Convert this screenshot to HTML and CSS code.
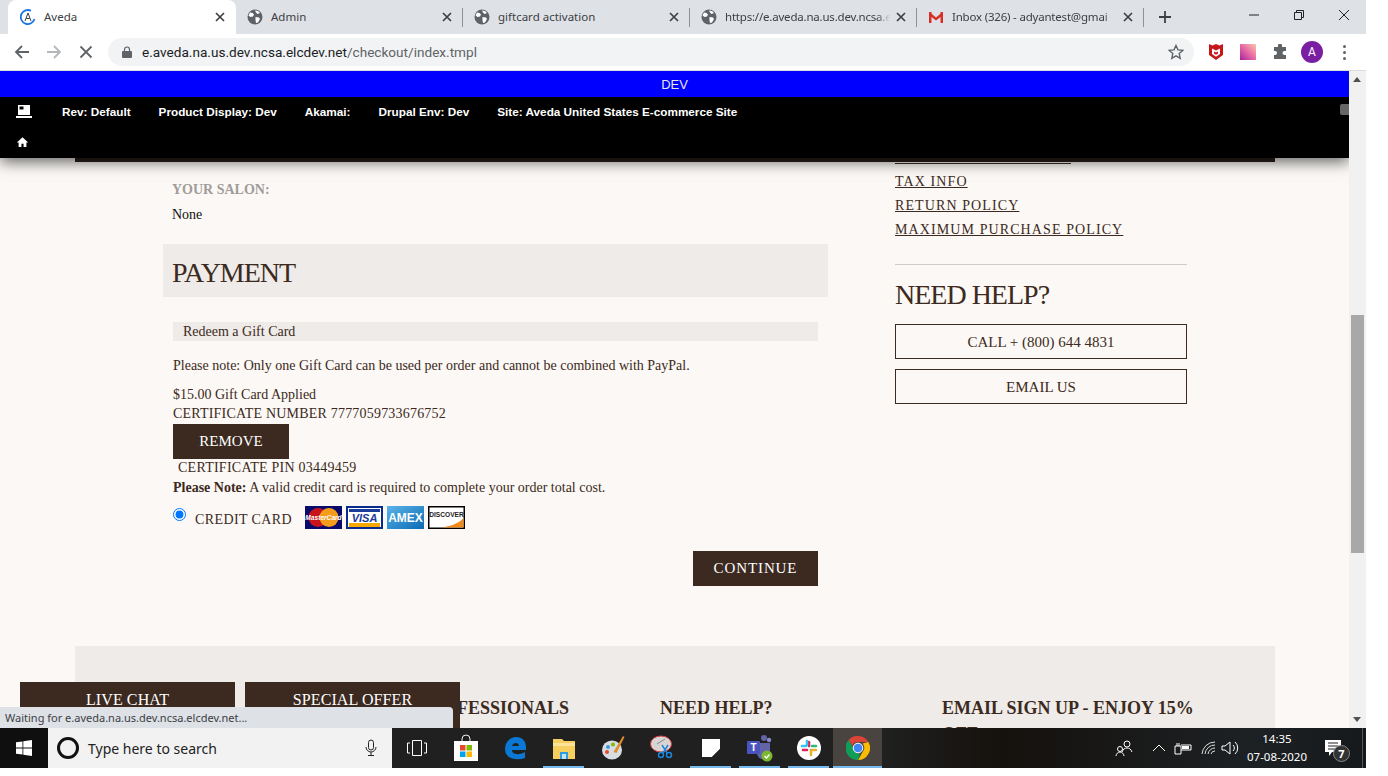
FILE: index.html
```html
<!DOCTYPE html>
<html lang="en">
  <head>
    <meta charset="UTF-8" />
    <title>Aveda</title>
    <link rel="stylesheet" href="styles.css">
  </head>
  <body>
    <svg class="defs" width="0" height="0">
      <symbol id="globe" viewBox="0 0 16 16">
        <circle cx="8" cy="8" r="7.500" fill="#5f6368" />
        <path d="M3 3.500l2.500 .5 1.500 1.500-1 2-2.500 .5-2-1.500zM8 1.500l3 .5 2 2-2.500 1-1.500-1.500zM8.500 8l3.500 .5 1 1.500-2 3.500-2 .5-.5-3z" fill="#fff" />
      </symbol>
      <symbol id="close-x" viewBox="0 0 10 10">
        <path d="M1 1l8 8M9 1l-8 8" stroke="#3c4043" stroke-width="1.700" fill="none" />
      </symbol>
    </svg>

    <div class="screen">
      <div class="tabstrip">
        <div class="tab tab-active">
          <svg class="favicon" viewBox="0 0 16 16">
            <path d="M11 1.800A7 7 0 1 0 14.500 10" stroke="#1a73e8" stroke-width="1.800" fill="none" />
            <path d="M5 12l3-8 3 8M6.200 9.500h3.600" stroke="#3c4043" stroke-width="1" fill="none" />
          </svg>
          <span class="tab-title">Aveda</span>
          <svg class="tab-close"><use href="#close-x" /></svg>
        </div>
        <div class="tab">
          <svg class="favicon"><use href="#globe" /></svg>
          <span class="tab-title">Admin</span>
          <svg class="tab-close"><use href="#close-x" /></svg>
        </div>
        <div class="tab">
          <svg class="favicon"><use href="#globe" /></svg>
          <span class="tab-title">giftcard activation</span>
          <svg class="tab-close"><use href="#close-x" /></svg>
        </div>
        <div class="tab">
          <svg class="favicon"><use href="#globe" /></svg>
          <span class="tab-title tab-fade">https://e.aveda.na.us.dev.ncsa.e</span>
          <svg class="tab-close"><use href="#close-x" /></svg>
        </div>
        <div class="tab">
          <svg class="favicon" viewBox="0 0 16 16">
            <path d="M1 3h2.500v11H1zM12.500 3H15v11h-2.500z" fill="#d93025" />
            <path d="M1.500 3l6.500 5.500L14.500 3v3.500L8 11.500 1.500 6.500z" fill="#d93025" />
          </svg>
          <span class="tab-title tab-fade">Inbox (326) - adyantest@gmai</span>
          <svg class="tab-close"><use href="#close-x" /></svg>
        </div>
        <svg class="new-tab" viewBox="0 0 12 12"><path d="M6 0v12M0 6h12" stroke="#3c4043" stroke-width="1.800" /></svg>
        <div class="win-controls">
          <svg viewBox="0 0 12 12"><path d="M1 6h10" stroke="#222" stroke-width="1" /></svg>
          <svg viewBox="0 0 12 12"><path d="M1.500 3.500h7v7h-7zM3.500 3.500v-2h7v7h-2" stroke="#222" stroke-width="1" fill="none" /></svg>
          <svg viewBox="0 0 12 12"><path d="M1 1l10 10M11 1L1 11" stroke="#222" stroke-width="1" /></svg>
        </div>
      </div>

      <div class="toolbar">
        <svg class="nav-btn" viewBox="0 0 16 16"><path d="M15 8H2M8 2L2 8l6 6" stroke="#5f6368" stroke-width="1.800" fill="none" /></svg>
        <svg class="nav-btn" viewBox="0 0 16 16"><path d="M1 8h13M8 2l6 6-6 6" stroke="#b4b7bb" stroke-width="1.800" fill="none" /></svg>
        <svg class="nav-btn" viewBox="0 0 16 16"><path d="M2.500 2.500l11 11M13.500 2.500l-11 11" stroke="#5f6368" stroke-width="1.800" fill="none" /></svg>
        <div class="omnibox">
          <svg class="lock" viewBox="0 0 10 12"><path d="M2.500 5V3.500a2.500 2.500 0 0 1 5 0V5" stroke="#5f6368" stroke-width="1.200" fill="none" /><rect y="5" width="10" height="7" rx="1" fill="#5f6368" /></svg>
          <span class="url"><span class="url-host">e.aveda.na.us.dev.ncsa.elcdev.net</span>/checkout/index.tmpl</span>
          <svg class="star" viewBox="0 0 16 16"><path d="M8 1.500l2 4.400 4.800 .5-3.600 3.200 1 4.700L8 11.900l-4.200 2.400 1-4.700L1.200 6.400 6 5.900z" stroke="#5f6368" stroke-width="1.400" fill="none" /></svg>
        </div>
        <div class="extensions">
          <svg class="ext" viewBox="0 0 14 16"><path d="M0 0l3.500 1.500L7 0l3.500 1.500L14 0v11l-7 5-7-5z" fill="#c8161d" /><path d="M3 4.500l4 2 4-2v5.500l-4 2.800-4-2.800z" fill="#fff" /><path d="M5 7.500l2 1 2-1v2l-2 1.300-2-1.300z" fill="#c8161d" /></svg>
          <div class="ext-swatch"></div>
          <svg class="ext" viewBox="0 0 16 16"><path d="M6 1.500a2 2 0 0 1 4 0V3h4v4h-1.500a2 2 0 0 0 0 4H14v4H2v-4h1a2 2 0 0 0 0-4H2V3h4z" fill="#5f6368" /></svg>
          <div class="avatar">A</div>
          <div class="kebab"><i></i><i></i><i></i></div>
        </div>
      </div>

      <div class="viewport">
        <div class="page">
          <header class="devbar">
            <div class="dev-flag">DEV</div>
            <div class="dev-info">
              <div class="dev-row">
                <svg class="dev-icon" viewBox="0 0 16 14"><path d="M2 0h12v10H2z" fill="#fff" /><path d="M3.500 1.500h4v3h-4z" fill="#000" /><path d="M0 11h16v2H0z" fill="#fff" /></svg>
                <span class="dev-item">Rev: Default</span>
                <span class="dev-item">Product Display: Dev</span>
                <span class="dev-item">Akamai:</span>
                <span class="dev-item">Drupal Env: Dev</span>
                <span class="dev-item">Site: Aveda United States E-commerce Site</span>
                <span class="dev-toggle"></span>
              </div>
              <div class="dev-row dev-row-home">
                <svg class="dev-home" viewBox="0 0 16 14"><path d="M8 1L1 7.500h2.200V13h3.500V9h2.600v4h3.500V7.500H15z" fill="#fff" /></svg>
              </div>
            </div>
          </header>

          <div class="wrap">
            <div class="columns">
              <main class="checkout">
                <div class="salon">
                  <h3 class="salon-label">YOUR SALON:</h3>
                  <p class="salon-name">None</p>
                </div>

                <h2 class="section-head">PAYMENT</h2>

                <div class="payment">
                  <div class="redeem-head">Redeem a Gift Card</div>
                  <p class="note">Please note: Only one Gift Card can be used per order and cannot be combined with PayPal.</p>
                  <div class="applied">$15.00 Gift Card Applied</div>
                  <div class="applied applied-wide">CERTIFICATE NUMBER 7777059733676752</div>
                  <button class="btn btn-remove">REMOVE</button>
                  <div class="cert-pin">CERTIFICATE PIN 03449459</div>
                  <div class="cc-note"><b>Please Note:</b> A valid credit card is required to complete your order total cost.</div>

                  <div class="pay-option">
                    <input class="pay-radio" type="radio" name="pay" checked />
                    <span class="pay-label">CREDIT CARD</span>
                    <div class="cards">
                      <svg class="card" viewBox="0 0 37 23">
                        <rect width="37" height="23" fill="#0a0a6b" />
                        <circle cx="13" cy="11.500" r="9.500" fill="#c8141c" />
                        <circle cx="24" cy="11.500" r="9.500" fill="#f59c1a" />
                        <text x="18.500" y="14" class="card-mc">MasterCard</text>
                      </svg>
                      <svg class="card" viewBox="0 0 37 23">
                        <rect x="1" y="1" width="35" height="21" fill="#fff" stroke="#0a2a8c" stroke-width="2" />
                        <rect x="3" y="3" width="31" height="3" fill="#1a3a9c" />
                        <rect x="3" y="17" width="31" height="4" fill="#f5a800" />
                        <text x="18.500" y="15.500" class="card-visa">VISA</text>
                      </svg>
                      <svg class="card" viewBox="0 0 37 23">
                        <defs>
                          <linearGradient id="amex-bg" x1="0" y1="0" x2="1" y2="1">
                            <stop offset="0" stop-color="#5cb4e8" />
                            <stop offset="1" stop-color="#0a6ab4" />
                          </linearGradient>
                        </defs>
                        <rect width="37" height="23" fill="url(#amex-bg)" />
                        <text x="18.500" y="15.500" class="card-amex">AMEX</text>
                      </svg>
                      <svg class="card" viewBox="0 0 37 23">
                        <rect x=".75" y=".75" width="35.500" height="21.500" fill="#fff" stroke="#000" stroke-width="1.500" />
                        <path d="M35.500 12v9.500H14C24 20 31 17 35.500 12z" fill="#f08a1c" />
                        <text x="18.500" y="10.500" class="card-disc">DISCOVER</text>
                      </svg>
                    </div>
                  </div>

                  <div class="actions">
                    <button class="btn btn-continue">CONTINUE</button>
                  </div>
                </div>
              </main>

              <aside class="sidebar">
                <div class="cut-link"></div>
                <a class="side-link" href="#">TAX INFO</a>
                <a class="side-link" href="#">RETURN POLICY</a>
                <a class="side-link" href="#">MAXIMUM PURCHASE POLICY</a>
                <hr class="side-rule" />
                <h2 class="side-head">NEED HELP?</h2>
                <a class="side-btn" href="#">CALL + (800) 644 4831</a>
                <a class="side-btn" href="#">EMAIL US</a>
              </aside>
            </div>

            <footer class="site-footer">
              <h4 class="foot-head">PROFESSIONALS</h4>
              <h4 class="foot-head">NEED HELP?</h4>
              <h4 class="foot-head">EMAIL SIGN UP - ENJOY 15% OFF</h4>
            </footer>
          </div>

          <div class="float-btns">
            <div class="float-btn">LIVE CHAT</div>
            <div class="float-btn">SPECIAL OFFER</div>
          </div>
          <div class="status-bubble">Waiting for e.aveda.na.us.dev.ncsa.elcdev.net...</div>
        </div>

        <div class="scrollbar">
          <div class="arrow-up"></div>
          <div class="track"><div class="thumb"></div></div>
          <div class="arrow-down"></div>
        </div>
      </div>

      <div class="taskbar">
        <div class="start">
          <svg viewBox="0 0 16 16" width="16" height="16"><path d="M0 2.300l6.500-.9v6.200H0zM7.300 1.300L16 0v7.600H7.300zM0 8.400h6.500v6.200L0 13.700zM7.300 8.400H16V16l-8.700-1.300z" fill="#fff" /></svg>
        </div>
        <div class="search">
          <span class="cortana"></span>
          <span class="search-text">Type here to search</span>
          <svg class="mic" viewBox="0 0 12 18"><rect x="3.500" y="1" width="5" height="10" rx="2.500" fill="none" stroke="#222" /><path d="M1 8a5 5 0 0 0 10 0M6 13v3M3 16.500h6" fill="none" stroke="#222" /></svg>
        </div>
        <div class="apps">
          <div class="app"><svg viewBox="0 0 20 16" width="20" height="16"><path d="M5.500 .5h9v15h-9zM3 3H.5v10H3M17 3h2.500v10H17" fill="none" stroke="#fff" /></svg></div>
          <div class="app"><svg viewBox="0 0 24 28" width="24" height="28"><path d="M8 8V5a4 4 0 0 1 8 0v3" fill="none" stroke="#eee" /><rect y="7" width="24" height="20" fill="#fff" /><rect x="6" y="11" width="5.500" height="5.500" fill="#e6492b" /><rect x="12.500" y="11" width="5.500" height="5.500" fill="#7fba00" /><rect x="6" y="17.500" width="5.500" height="5.500" fill="#00a4ef" /><rect x="12.500" y="17.500" width="5.500" height="5.500" fill="#ffb900" /></svg></div>
          <div class="app"><svg viewBox="0 0 24 24" width="24" height="24"><path d="M2 13C2 5 8 1 13 1c6 0 10 4 10 10v3H9c0 4 6 6 13 2v6c-9 3-20 1-20-9zm7-3h7c0-4-6-4-7 0z" fill="#0a78d4" /></svg></div>
          <div class="app app-open"><svg viewBox="0 0 24 24" width="24" height="24"><path d="M1 3h9l2 2h11v18H1z" fill="#f6cf5e" /><path d="M1 7h22v3H1z" fill="#fbe39a" /><path d="M8 16h8v7H8z" fill="#2d9ce0" /><path d="M10 18h4v5h-4z" fill="#bfe4f7" /></svg></div>
          <div class="app"><svg viewBox="0 0 24 26" width="24" height="26"><ellipse cx="11" cy="15" rx="10" ry="9.500" fill="#d7dde2" /><circle cx="7" cy="12" r="2" fill="#3b9ad9" /><circle cx="12" cy="9.500" r="2" fill="#7fba00" /><circle cx="6" cy="17" r="2" fill="#e6492b" /><path d="M22 1l1.500 1-8 16-3-1z" fill="#e08a2c" /></svg></div>
          <div class="app"><svg viewBox="0 0 24 26" width="24" height="26"><ellipse cx="11" cy="9" rx="10.500" ry="8" fill="#d9d4d4" stroke="#d43d3d" /><path d="M7 9l8-5" stroke="#888" /><path d="M12 10l5 8M18 10l-5 8" stroke="#1c86d9" stroke-width="1.500" /><circle cx="11" cy="20" r="2.500" fill="none" stroke="#1c86d9" stroke-width="1.500" /><circle cx="19" cy="20" r="2.500" fill="none" stroke="#1c86d9" stroke-width="1.500" /></svg></div>
          <div class="app app-open"><svg viewBox="0 0 18 18" width="18" height="18"><path d="M0 0h18v10l-8 8H0z" fill="#fff" /><path d="M18 10v8h-8z" fill="#222" /></svg></div>
          <div class="app app-open"><svg viewBox="0 0 26 28" width="26" height="28"><circle cx="17" cy="4" r="3" fill="#6264a7" /><circle cx="22" cy="6" r="2.200" fill="#8b8cc7" /><path d="M10 9h13v10a6 6 0 0 1-13 0z" fill="#6264a7" /><rect y="7" width="13" height="13" rx="1" fill="#4b53bc" /><text x="6.500" y="17" class="teams-t">T</text><circle cx="20" cy="22" r="5.500" fill="#7cb82f" /><path d="M17.500 22l2 2 3-3.500" stroke="#fff" stroke-width="1.400" fill="none" /></svg></div>
          <div class="app app-open"><svg viewBox="0 0 24 24" width="24" height="24"><circle cx="12" cy="12" r="12" fill="#fff" /><path d="M6 14h4M12 6v4" stroke="#e01e5a" stroke-width="2.600" stroke-linecap="round" /><path d="M10 5v4M5 10h4" stroke="#36c5f0" stroke-width="2.600" stroke-linecap="round" /><path d="M15 10h4M14 14v0" stroke="#2eb67d" stroke-width="2.600" stroke-linecap="round" /><path d="M14 15v4M15 14h4" stroke="#ecb22e" stroke-width="2.600" stroke-linecap="round" /></svg></div>
          <div class="app app-open app-active"><svg viewBox="0 0 24 24" width="24" height="24"><path d="M12 0a12 12 0 0 1 10.400 6H12a6 6 0 0 0-5.700 4L2.600 4A12 12 0 0 1 12 0z" fill="#db4437" /><path d="M22.400 6A12 12 0 0 1 12 24l5.200-9a6 6 0 0 0-.7-7.400z" fill="#fbbc04" /><path d="M12 24A12 12 0 0 1 2.600 4l5 8.800A6 6 0 0 0 14 17.600z" fill="#0f9d58" /><circle cx="12" cy="12" r="4.800" fill="#4285f4" stroke="#fff" stroke-width="1" /></svg></div>
        </div>
        <div class="tray">
          <svg class="tray-icon tray-people" viewBox="0 0 18 18"><circle cx="12" cy="5" r="3" fill="none" stroke="#fff" /><path d="M7 13c1-3 3-4 5-4s4 1 5 4" fill="none" stroke="#fff" /><circle cx="5" cy="10" r="2.500" fill="none" stroke="#fff" /><path d="M1 17c0-2 2-4 4-4s4 2 4 4" fill="none" stroke="#fff" /></svg>
          <svg class="tray-icon tray-chevron" viewBox="0 0 18 18"><path d="M3 12l6-6 6 6" fill="none" stroke="#fff" /></svg>
          <svg class="tray-icon tray-power" viewBox="0 0 18 18"><path d="M1 7h6v8H1zM3 4v3M5 4v3M7 11h10V6H7" fill="none" stroke="#fff" /><rect x="8" y="7" width="7" height="3" fill="#fff" /></svg>
          <svg class="tray-icon tray-wifi" viewBox="0 0 18 18"><path d="M2 15A13 13 0 0 1 15 3M5 15A10 10 0 0 1 15 6M8 15a7 7 0 0 1 7-6M11 15a4 4 0 0 1 4-3" fill="none" stroke="#ddd" /></svg>
          <svg class="tray-icon tray-sound" viewBox="0 0 18 18"><path d="M1 7h3l5-4v12l-5-4H1zM12 6a4 4 0 0 1 0 6M14 3a8 8 0 0 1 0 12" fill="none" stroke="#fff" /></svg>
          <div class="clock"><div>14:35</div><div>07-08-2020</div></div>
          <div class="notify">
            <svg viewBox="0 0 16 16" width="16" height="16"><path d="M0 0h16v12H7l-3 4v-4H0z" fill="#fff" /><path d="M3 3h10M3 6h10M3 9h7" stroke="#222" /></svg>
            <span class="notify-count">7</span>
          </div>
          <div class="show-desktop"></div>
        </div>
      </div>
    </div>
  </body>
</html>
```

FILE: styles.css
```css
* {
  box-sizing: border-box;
}

body {
  margin: 0;
  background: #fff;
  font-family: "Liberation Serif", serif;
}

.defs {
  position: absolute;
}

.screen {
  width: 1366px;
  height: 768px;
  display: flex;
  flex-direction: column;
  overflow: hidden;
}

/* browser chrome */
.tabstrip {
  height: 34px;
  background: #dee1e6;
  display: flex;
  padding-left: 8px;
  font-family: "Noto Sans", sans-serif;
  font-size: 11.500px;
  color: #3c4043;
}

.tab {
  width: 227px;
  display: flex;
  align-items: center;
  padding: 0 11px;
  position: relative;
}

.tab::after {
  content: "";
  position: absolute;
  right: 0;
  top: 8px;
  height: 19px;
  width: 1px;
  background: #8e9196;
}

.tab-active {
  width: 228px;
  background: #fff;
  border-radius: 8px 8px 0 0;
  padding-left: 12px;
}

.tab-active::after {
  display: none;
}

.favicon {
  width: 16px;
  height: 16px;
  flex: none;
  margin-right: 8px;
}

.tab-title {
  flex: 1;
  min-width: 0;
  white-space: nowrap;
  margin-top: -2px;
}

.tab-fade {
  letter-spacing: -0.2px;
  -webkit-mask-image: linear-gradient(to right, #000 92%, transparent);
  mask-image: linear-gradient(to right, #000 92%, transparent);
}

.tab-close {
  width: 10px;
  height: 10px;
  flex: none;
  margin-left: 6px;
}

.new-tab {
  width: 12px;
  height: 12px;
  margin: 11px 0 0 15px;
}

.win-controls {
  margin-left: auto;
  display: flex;
  gap: 33px;
  padding: 9px 16px 0 0;
}

.win-controls svg {
  width: 12px;
  height: 12px;
}

.toolbar {
  height: 37px;
  background: #fff;
  border-bottom: 1px solid #dadce0;
  display: flex;
  align-items: center;
  padding-left: 14px;
}

.nav-btn {
  width: 16px;
  height: 16px;
  margin-right: 16px;
}

.omnibox {
  width: 1086px;
  height: 28px;
  margin-left: -2px;
  background: #f1f3f4;
  border-radius: 14px;
  display: flex;
  align-items: center;
  padding: 0 10px 0 14px;
}

.lock {
  width: 10px;
  height: 12px;
  margin-right: 10px;
}

.url {
  flex: 1;
  font-family: Roboto, sans-serif;
  font-size: 13.600px;
  color: #5f6368;
}

.url-host {
  color: #202124;
}

.star {
  width: 16px;
  height: 16px;
}

.extensions {
  display: flex;
  align-items: center;
  padding-left: 14px;
}

.ext {
  width: 16px;
  height: 16px;
}

.ext-swatch {
  width: 16px;
  height: 16px;
  margin: 0 16px;
  background: linear-gradient(45deg, #a5239c, #e86aa6 50%, #fbc7a8);
}

.avatar {
  width: 22px;
  height: 22px;
  margin-left: 13px;
  border-radius: 50%;
  background: #7b1fa2;
  color: #fff;
  font-family: Roboto, sans-serif;
  font-size: 12px;
  line-height: 22px;
  text-align: center;
}

.kebab {
  margin-left: 20px;
  display: flex;
  flex-direction: column;
  gap: 3px;
}

.kebab i {
  width: 3px;
  height: 3px;
  border-radius: 50%;
  background: #5f6368;
}

/* page viewport */
.viewport {
  height: 657px;
  display: flex;
}

.page {
  flex: 1;
  position: relative;
  overflow: hidden;
  background: #fbf8f5;
  color: #3c2a21;
  font-size: 14px;
}

.devbar {
  position: absolute;
  top: 0;
  left: 0;
  right: 0;
  z-index: 5;
  box-shadow: 0 4px 14px rgba(0, 0, 0, 0.6);
  font-family: "Liberation Sans", sans-serif;
}

.dev-flag {
  height: 26px;
  background: #00f;
  color: #e6e6e6;
  font-size: 13px;
  line-height: 27px;
  text-align: center;
}

.dev-info {
  height: 61px;
  background: #000;
  color: #fff;
}

.dev-row {
  height: 29px;
  display: flex;
  align-items: center;
  gap: 28px;
  padding-left: 16px;
  font-size: 11.750px;
  font-weight: bold;
  position: relative;
}

.dev-row-home {
  height: 32px;
}

.dev-icon {
  width: 16px;
  height: 14px;
  margin-right: 2px;
}

.dev-home {
  width: 13px;
  height: 12px;
}

.dev-toggle {
  position: absolute;
  right: 0;
  top: 7px;
  width: 9px;
  height: 11px;
  background: #666;
  border-radius: 2px 0 0 2px;
}

.wrap {
  width: 1200px;
  margin: 87px 0 0 75px;
  border-top: 4px solid #2a1f1a;
}

.columns {
  height: 484px;
  display: flex;
}

.checkout {
  width: 665px;
  margin-left: 88px;
  padding-top: 19px;
}

.salon {
  padding-left: 9px;
}

.salon-label {
  margin: 0;
  font-size: 14px;
  line-height: 17px;
  color: #a09c9a;
}

.salon-name {
  margin: 9px 0 0;
  line-height: 16px;
  color: #111;
}

.section-head {
  margin: 21px 0 0;
  height: 53px;
  padding-left: 9px;
  background: #eeebe8;
  font-size: 28px;
  font-weight: normal;
  line-height: 57px;
  letter-spacing: -1px;
}

.payment {
  padding: 25px 10px 0 10px;
}

.redeem-head {
  height: 19px;
  padding-left: 10px;
  background: #eeebe8;
  line-height: 19px;
}

.note {
  margin: 15px 0 10px;
  line-height: 19px;
}

.applied {
  line-height: 19px;
}

.applied-wide {
  letter-spacing: 0.2px;
}

.btn {
  display: block;
  border: 0;
  padding: 0;
  background: #3c2a21;
  color: #fff;
  font-family: "Liberation Serif", serif;
}

.btn-remove {
  width: 116px;
  height: 35px;
  margin-top: 1px;
  font-size: 15px;
}

.cert-pin {
  padding-left: 5px;
  line-height: 18px;
  letter-spacing: 0.25px;
}

.cc-note {
  line-height: 19px;
  margin-top: 1px;
}

.pay-option {
  display: flex;
  align-items: flex-start;
  margin-top: 9px;
}

.pay-radio {
  width: 13px;
  height: 13px;
  margin: 2px 0 0 0;
}

.pay-label {
  margin: 5px 0 0 9px;
  line-height: 18px;
  letter-spacing: 0.4px;
}

.cards {
  display: flex;
  gap: 4px;
  margin-left: 13px;
}

.card {
  width: 37px;
  height: 23px;
}

.card-mc {
  font: italic bold 6.600px "Liberation Sans", sans-serif;
  fill: #fff;
  text-anchor: middle;
}

.card-visa {
  font: italic bold 11px "Liberation Sans", sans-serif;
  fill: #1a3a9c;
  text-anchor: middle;
}

.card-amex {
  font: bold 12px "Liberation Sans", sans-serif;
  fill: #fff;
  text-anchor: middle;
}

.card-disc {
  font: bold 6.600px "Liberation Sans", sans-serif;
  fill: #222;
  text-anchor: middle;
}

.actions {
  display: flex;
  justify-content: flex-end;
  margin-top: 22px;
}

.btn-continue {
  width: 125px;
  height: 35px;
  font-size: 15px;
  letter-spacing: 0.9px;
}

.sidebar {
  width: 292px;
  margin-left: 67px;
  display: flex;
  flex-direction: column;
}

.cut-link {
  width: 176px;
  height: 2px;
  border-bottom: 1px solid #3c2a21;
  margin-bottom: 9px;
}

.side-link {
  align-self: flex-start;
  color: #3c2a21;
  line-height: 17px;
  margin-bottom: 7px;
  letter-spacing: 1.100px;
}

.side-rule {
  width: 100%;
  margin: 19px 0 0;
  border: 0;
  border-top: 1px solid #cfcbc8;
}

.side-head {
  margin: 14px 0 0;
  font-size: 28px;
  font-weight: normal;
  line-height: 32px;
  letter-spacing: -1px;
}

.side-btn {
  height: 35px;
  margin-top: 13px;
  border: 1px solid #3c2a21;
  color: #3c2a21;
  font-size: 15px;
  line-height: 34px;
  text-align: center;
  text-decoration: none;
}

.side-btn + .side-btn {
  margin-top: 10px;
}

.site-footer {
  height: 200px;
  background: #eeebe8;
  display: grid;
  grid-template-columns: 241px 282px 280px;
  padding: 50px 0 0 344px;
}

.foot-head {
  margin: 0;
  font-size: 18px;
  line-height: 25.500px;
}

.float-btns {
  position: absolute;
  left: 20px;
  bottom: 0;
  display: flex;
  gap: 10px;
  z-index: 3;
}

.float-btn {
  width: 215px;
  height: 46px;
  background: #3c2a21;
  color: #fff;
  font-size: 16px;
  line-height: 36px;
  letter-spacing: 0.1px;
  text-align: center;
}

.status-bubble {
  position: absolute;
  left: 0;
  bottom: 0;
  width: 453px;
  height: 21px;
  z-index: 4;
  background: #dee1e6;
  border-radius: 0 4px 0 0;
  color: #3c4043;
  font-family: "Noto Sans", sans-serif;
  font-size: 11px;
  line-height: 21px;
  padding-left: 5px;
}

.scrollbar {
  width: 17px;
  background: #f1f1f1;
  display: flex;
  flex-direction: column;
  align-items: center;
}

.arrow-up,
.arrow-down {
  height: 17px;
  flex: none;
  position: relative;
  width: 100%;
}

.arrow-up::after,
.arrow-down::after {
  content: "";
  position: absolute;
  left: 4px;
  top: 6px;
  border: 4px solid transparent;
  border-top: 0;
  border-bottom: 5px solid #505050;
}

.arrow-down::after {
  border-bottom: 0;
  border-top: 5px solid #505050;
}

.track {
  flex: 1;
  width: 100%;
  padding-top: 227px;
}

.thumb {
  width: 13px;
  height: 238px;
  margin-left: 2px;
  background: #a8a8a8;
}

/* windows taskbar */
.taskbar {
  height: 40px;
  display: flex;
  background: linear-gradient(90deg, #202020 883px, #15110d 1000px, #1d2124 1250px, #16191c);
  color: #fff;
}

.start {
  width: 48px;
  background: #0f0f0f;
  display: flex;
  align-items: center;
  justify-content: center;
}

.search {
  width: 344px;
  background: #f2f2f2;
  display: flex;
  align-items: center;
  padding-left: 9px;
  color: #222;
  font-family: "Noto Sans", sans-serif;
  font-size: 14px;
}

.cortana {
  width: 22px;
  height: 22px;
  border: 3px solid #111;
  border-radius: 50%;
  margin-right: 9px;
}

.search-text {
  flex: 1;
}

.mic {
  width: 12px;
  height: 18px;
  margin-right: 15px;
}

.apps {
  display: flex;
}

.app {
  width: 49px;
  display: flex;
  align-items: center;
  justify-content: center;
  position: relative;
}

.app-open::after {
  content: "";
  position: absolute;
  left: 4px;
  right: 4px;
  bottom: 0;
  height: 2px;
  background: #76b9ed;
}

.app-active {
  background: #4a4440;
}

.app-active::after {
  left: 0;
  right: 0;
}

.tray {
  margin-left: auto;
  display: flex;
  align-items: center;
  font-family: "Noto Sans", sans-serif;
}

.tray-icon {
  width: 18px;
  height: 18px;
}

.tray-people {
  margin-right: 17px;
}

.tray-chevron {
  margin-right: 6px;
}

.tray-power {
  margin-right: 8px;
}

.tray-wifi {
  margin-right: 3px;
}

.clock {
  width: 72px;
  margin: 0 12px 0 2px;
  font-size: 11.500px;
  line-height: 18px;
  text-align: center;
}

.notify {
  position: relative;
  width: 24px;
  margin-right: 13px;
  display: flex;
}

.notify-count {
  position: absolute;
  left: 8px;
  top: 5px;
  width: 17px;
  height: 17px;
  border-radius: 50%;
  border: 1px solid #888;
  background: #333;
  font-size: 11px;
  font-weight: bold;
  line-height: 15px;
  text-align: center;
}

.show-desktop {
  width: 1px;
  height: 40px;
  margin-right: 3px;
  background: #555;
}

.teams-t {
  font: bold 10px "Liberation Sans", sans-serif;
  fill: #fff;
  text-anchor: middle;
}
```
